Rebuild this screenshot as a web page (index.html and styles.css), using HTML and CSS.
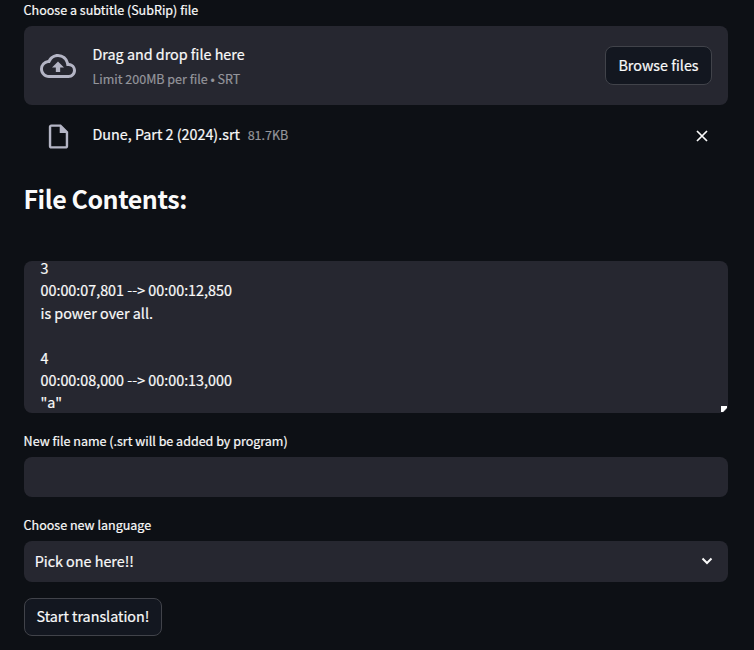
FILE: index.html
```
<!DOCTYPE html>
<html lang="en">
<head>
<meta charset="utf-8">
<title>Subtitle translator</title>
<link rel="stylesheet" href="styles.css">
</head>
<body>
<main class="app">
  <div class="label label-upload"><span>Choose a subtitle (SubRip) file</span></div>
  <section class="dropzone">
    <svg class="cloud" viewBox="0 0 24 24" width="36" height="36"><path fill="currentColor" d="M19.35 10.04A7.49 7.49 0 0 0 12 4C9.11 4 6.6 5.64 5.35 8.04A5.994 5.994 0 0 0 0 14c0 3.31 2.69 6 6 6h13c2.76 0 5-2.24 5-5 0-2.64-2.05-4.78-4.65-4.96zM19 18H6c-2.21 0-4-1.79-4-4 0-2.05 1.53-3.76 3.56-3.97l1.07-.11.5-.95A5.469 5.469 0 0 1 12 6c2.62 0 4.88 1.86 5.39 4.43l.3 1.5 1.53.11A2.98 2.98 0 0 1 22 15c0 1.65-1.35 3-3 3zM8 13h2.55v3h2.9v-3H16l-4-4z"/></svg>
    <div class="drop-text">
      <div class="title"><span>Drag and drop file here</span></div>
      <div class="hint"><span>Limit 200MB per file • SRT</span></div>
    </div>
    <button class="button browse"><span>Browse files</span></button>
  </section>
  <div class="file-row">
    <svg class="doc" viewBox="0 0 24 24" width="29" height="29"><path fill="currentColor" d="M6 2c-1.1 0-2 .9-2 2v16c0 1.1.9 2 2 2h12c1.1 0 2-.9 2-2V8l-6-6H6zm0 18V4h7v5h5v11H6z"/></svg>
    <div class="file-info"><span>Dune, Part 2 (2024).srt</span><span class="size">81.7KB</span></div>
    <svg class="close" viewBox="0 0 12 12" width="12" height="12"><path d="M1 1l10 10M11 1L1 11" stroke="currentColor" stroke-width="1.7" fill="none"/></svg>
  </div>
  <h2><span>File Contents:</span></h2>
  <div class="textarea"><pre>3
00:00:07,801 --&gt; 00:00:12,850
is power over all.

4
00:00:08,000 --&gt; 00:00:13,000
"a"</pre><i class="grip"></i></div>
  <div class="label label-name"><span>New file name (.srt will be added by program)</span></div>
  <div class="input"></div>
  <div class="label label-lang"><span>Choose new language</span></div>
  <div class="select"><span>Pick one here!!</span>
    <svg class="chevron" viewBox="0 0 12 8" width="12" height="8"><path d="M1.5 1.5L6 6l4.5-4.5" stroke="currentColor" stroke-width="2" fill="none"/></svg>
  </div>
  <button class="button start"><span>Start translation!</span></button>
</main>
</body>
</html>
```
FILE: styles.css
```
* { box-sizing: border-box; }
body {
  margin: 0;
  height: 650px;
  overflow: hidden;
  background: #0d1015;
  color: #fafafa;
  font: 14.33px/22.4px "Noto Sans CJK JP", "Noto Sans", sans-serif;
  -webkit-text-stroke: 0.2px currentColor;
}
.app { width: 704px; margin-left: 24px; display: flex; flex-direction: column; }
.label { font-size: 12.53px; line-height: 20px; height: 20px; margin-left: -0.4px; }
.label-upload { margin-bottom: 6px; }
.dropzone {
  height: 79px; padding: 0 16px; display: flex; align-items: center;
  background: #262730; border-radius: 8px;
}
.cloud { color: #b4b5c5; margin-right: 16.5px; }
.drop-text { flex: 1; }
.title { line-height: 24px; margin-top: -1px; }
.hint { font-size: 12.53px; line-height: 20px; margin-top: 3px; color: #94959b; }
.button {
  border: 1px solid #41434a; border-radius: 8px; background: #131720; color: #fafafa;
  font: inherit; padding: 0; white-space: nowrap;
}
.browse { width: 107px; height: 39px; }
.file-row { height: 31px; margin-top: 16px; display: flex; align-items: center; padding: 0 20px; }
.doc { color: #b4b5c5; margin-right: 19.5px; }
.file-info { padding-bottom: 3px; }
.size { font-size: 12.53px; color: #94959b; margin-left: 7.8px; }
.close { margin: 0 0 1px auto; }
h2 {
  margin: 26px 0 43px -0.6px; font-size: 25px; line-height: 40px; font-weight: 700;
  letter-spacing: -0.45px; -webkit-text-stroke: 0;
}
.textarea {
  position: relative; display: flex; height: 152px; background: #262730;
  border-radius: 8px; padding-left: 16.5px;
}
pre { margin: -4px 0 0; font: inherit; }
.grip {
  position: absolute; right: 1px; bottom: 1px; width: 6px; height: 6px;
  background: #fff; clip-path: polygon(0 0, 100% 0, 100% 35%, 35% 100%, 0 100%);
}
.label-name { margin-top: 18px; margin-bottom: 6px; }
.input { height: 40px; background: #262730; border-radius: 8px; }
.label-lang { margin-top: 18px; margin-bottom: 6px; }
.select {
  height: 41px; background: #262730; border-radius: 8px; padding: 0 15px 0 10.7px;
  display: flex; align-items: center; justify-content: space-between;
}
.chevron { margin-bottom: 2px; }
.start { width: 138px; height: 38px; margin-top: 16px; padding-bottom: 2px; }
```
